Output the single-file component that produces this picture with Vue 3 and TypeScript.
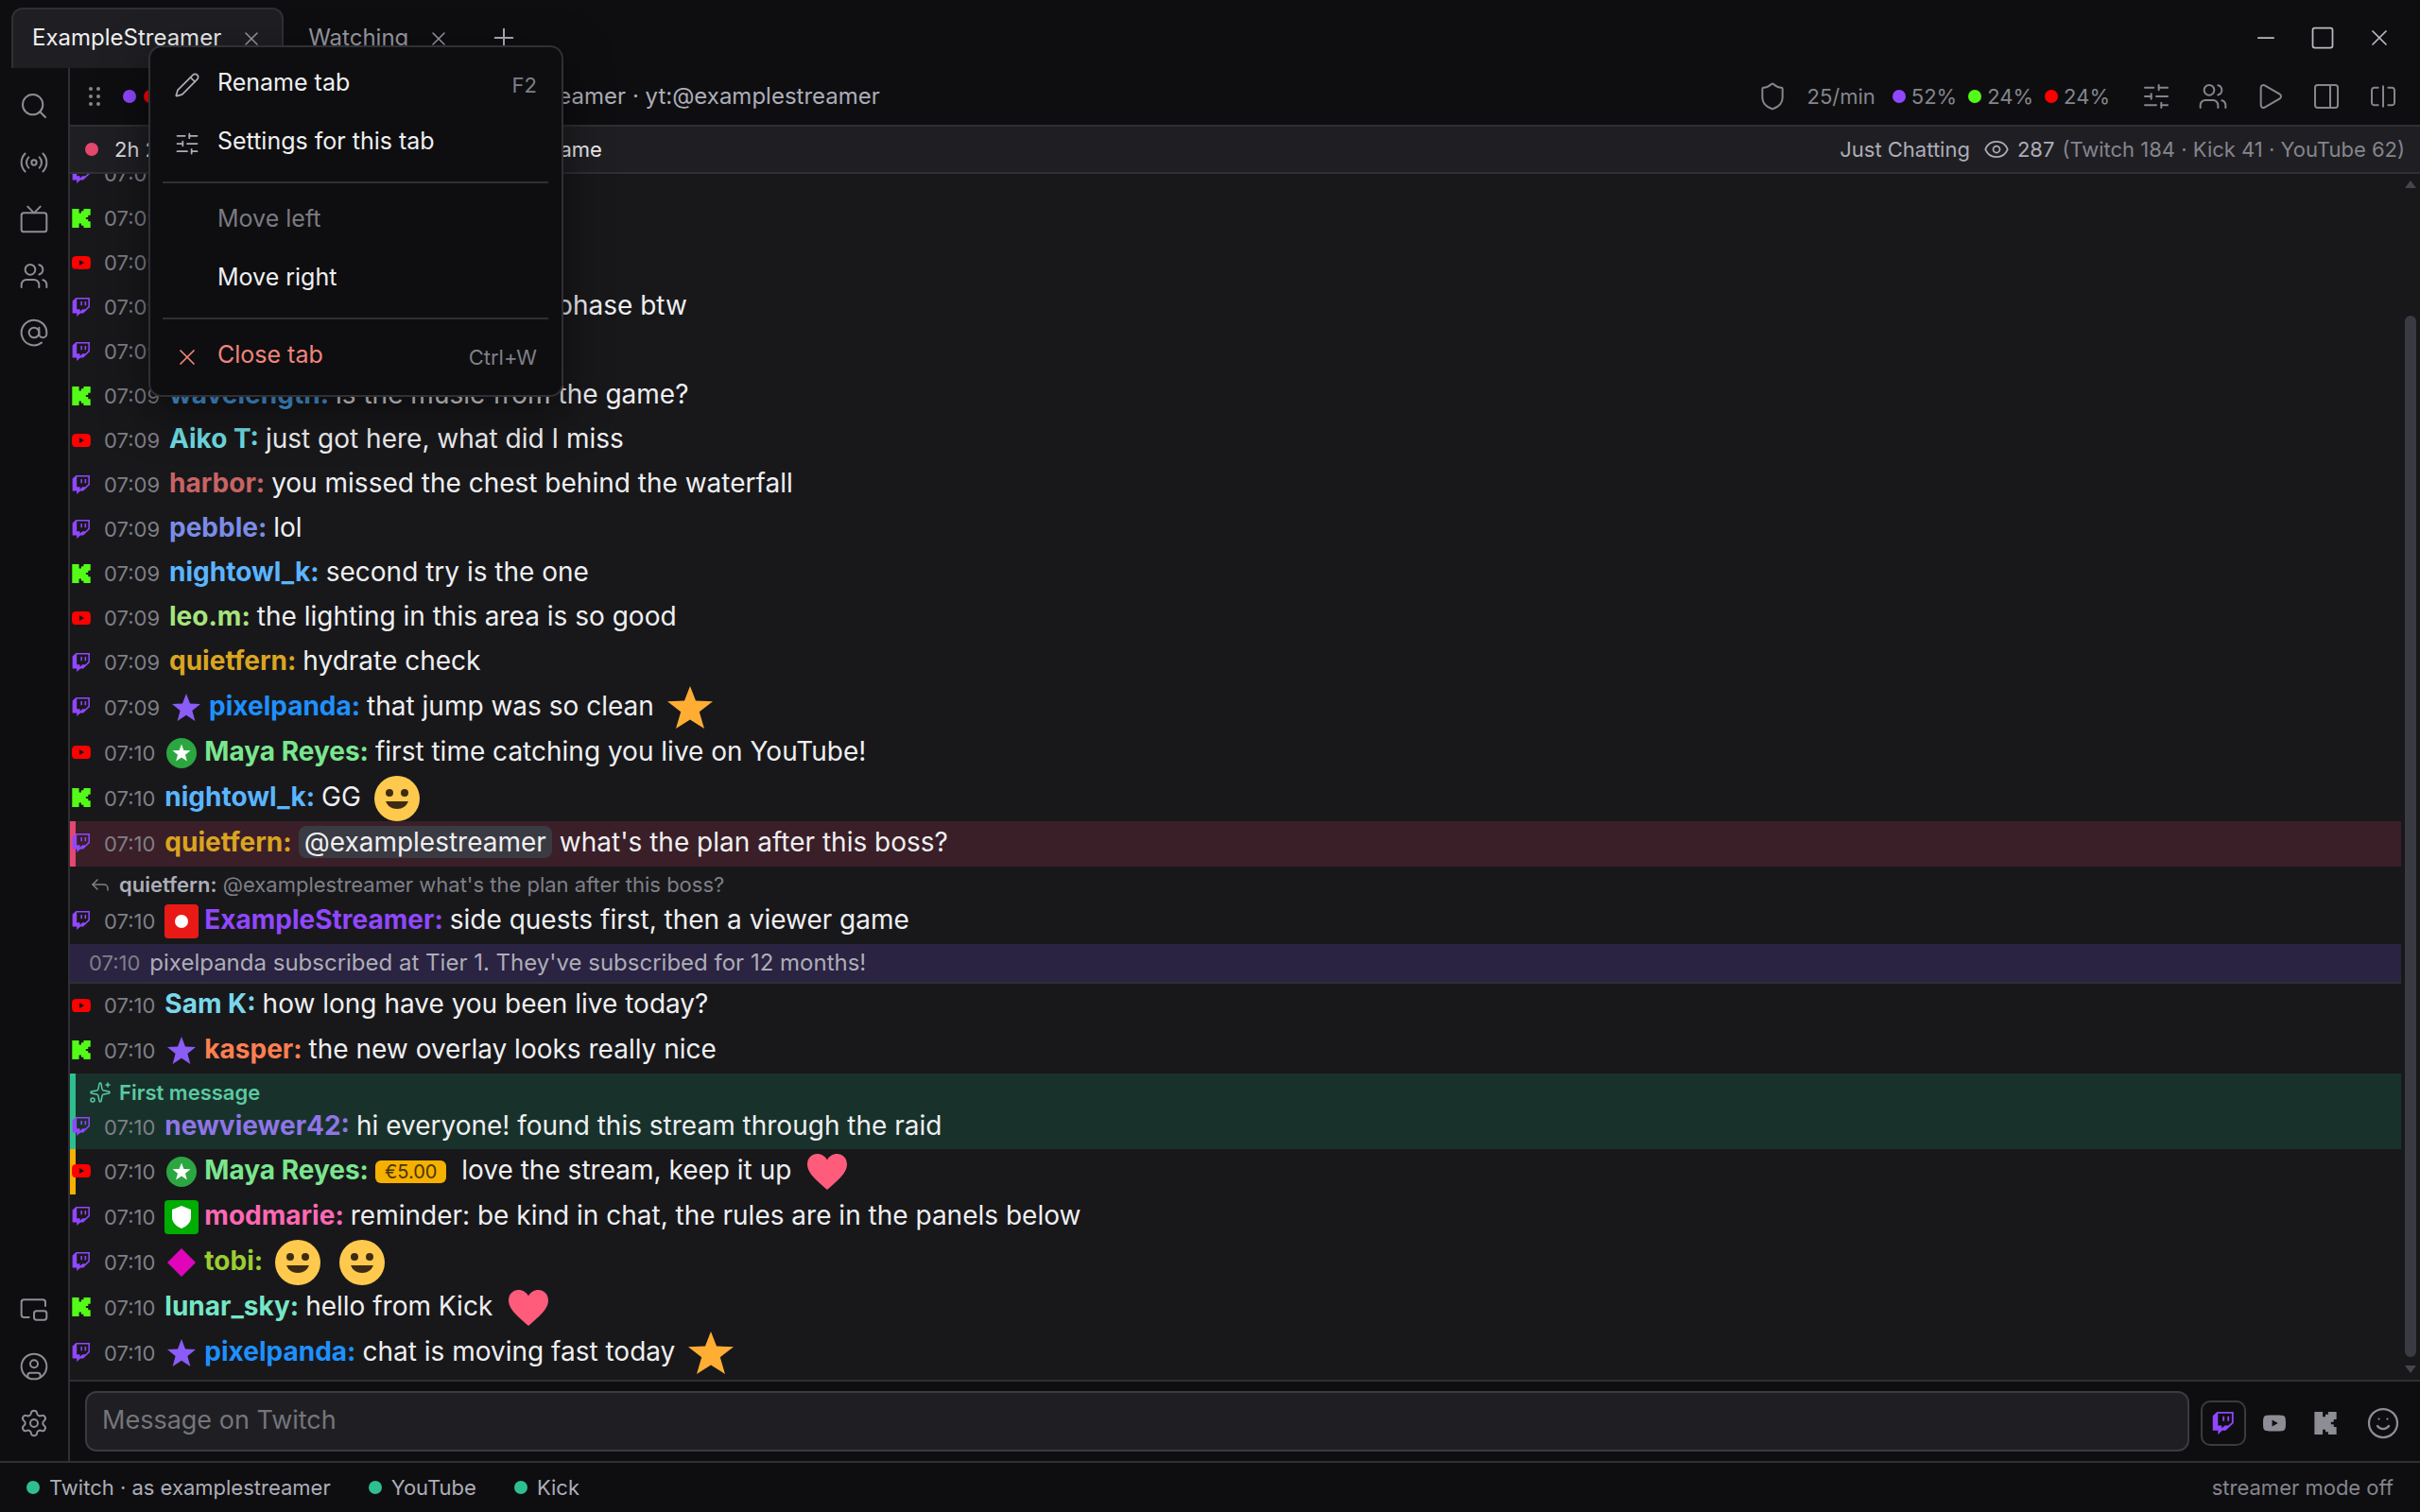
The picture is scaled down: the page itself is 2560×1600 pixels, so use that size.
<script setup lang="ts">
import { ref } from 'vue'

type Platform = 'twitch' | 'youtube' | 'kick'
type Badge = 'star' | 'member' | 'broadcaster' | 'moderator' | 'diamond'
type Emote = 'smile' | 'heart' | 'goldstar'

interface Part {
  kind: 'text' | 'mention' | 'emote' | 'tag'
  text?: string
  emote?: Emote
}

interface Message {
  id: number
  platform?: Platform
  time: string
  name?: string
  color?: string
  badge?: Badge
  look?: 'mention' | 'first' | 'paid' | 'system'
  reply?: { name: string; text: string }
  parts: Part[]
}

const text = (value: string): Part => ({ kind: 'text', text: value })
const emote = (name: Emote): Part => ({ kind: 'emote', emote: name })

const icons: Record<string, string[]> = {
  search: ['m21 21-4.34-4.34', 'M19 11a8 8 0 1 1-16 0 8 8 0 0 1 16 0z'],
  radio: [
    'M16.247 7.761a6 6 0 0 1 0 8.478',
    'M19.075 4.933a10 10 0 0 1 0 14.134',
    'M4.925 19.067a10 10 0 0 1 0-14.134',
    'M7.753 16.239a6 6 0 0 1 0-8.478',
    'M14 12a2 2 0 1 1-4 0 2 2 0 0 1 4 0z',
  ],
  tv: ['m17 2-5 5-5-5', 'M4 7h16a2 2 0 0 1 2 2v11a2 2 0 0 1-2 2H4a2 2 0 0 1-2-2V9a2 2 0 0 1 2-2z'],
  users: [
    'M16 21v-2a4 4 0 0 0-4-4H6a4 4 0 0 0-4 4v2',
    'M16 3.128a4 4 0 0 1 0 7.744',
    'M22 21v-2a4 4 0 0 0-3-3.87',
    'M13 7a4 4 0 1 1-8 0 4 4 0 0 1 8 0z',
  ],
  at: ['M16 12a4 4 0 1 1-8 0 4 4 0 0 1 8 0z', 'M16 8v5a3 3 0 0 0 6 0v-1a10 10 0 1 0-4 8'],
  popout: [
    'M21 9V6a2 2 0 0 0-2-2H4a2 2 0 0 0-2 2v10c0 1.1.9 2 2 2h4',
    'M14 13h6a2 2 0 0 1 2 2v3a2 2 0 0 1-2 2h-6a2 2 0 0 1-2-2v-3a2 2 0 0 1 2-2z',
  ],
  account: [
    'M22 12a10 10 0 1 1-20 0 10 10 0 0 1 20 0z',
    'M15 10a3 3 0 1 1-6 0 3 3 0 0 1 6 0z',
    'M7 20.662V19a2 2 0 0 1 2-2h6a2 2 0 0 1 2 2v1.662',
  ],
  settings: [
    'M9.671 4.136a2.34 2.34 0 0 1 4.659 0 2.34 2.34 0 0 0 3.319 1.915 2.34 2.34 0 0 1 2.33 4.033 2.34 2.34 0 0 0 0 3.831 2.34 2.34 0 0 1-2.33 4.033 2.34 2.34 0 0 0-3.319 1.915 2.34 2.34 0 0 1-4.659 0 2.34 2.34 0 0 0-3.32-1.915 2.34 2.34 0 0 1-2.33-4.033 2.34 2.34 0 0 0 0-3.831A2.34 2.34 0 0 1 6.35 6.051a2.34 2.34 0 0 0 3.319-1.915',
    'M15 12a3 3 0 1 1-6 0 3 3 0 0 1 6 0z',
  ],
  shield: [
    'M20 13c0 5-3.5 7.5-7.66 8.95a1 1 0 0 1-.67-.01C7.5 20.5 4 18 4 13V6a1 1 0 0 1 1-1c2 0 4.5-1.2 6.24-2.72a1.17 1.17 0 0 1 1.52 0C14.51 3.81 17 5 19 5a1 1 0 0 1 1 1z',
  ],
  sliders: ['M10 5H3', 'M12 19H3', 'M14 3v4', 'M16 17v4', 'M21 12h-9', 'M21 19h-5', 'M21 5h-7', 'M8 10v4', 'M8 12H3'],
  play: ['M5 5a2 2 0 0 1 3.008-1.728l11.997 6.998a2 2 0 0 1 .003 3.458l-12 7A2 2 0 0 1 5 19z'],
  panel: ['M5 3h14a2 2 0 0 1 2 2v14a2 2 0 0 1-2 2H5a2 2 0 0 1-2-2V5a2 2 0 0 1 2-2z', 'M15 3v18'],
  split: ['M8 19H5c-1 0-2-1-2-2V7c0-1 1-2 2-2h3', 'M16 5h3c1 0 2 1 2 2v10c0 1-1 2-2 2h-3', 'M12 4v16'],
  eye: [
    'M2.062 12.348a1 1 0 0 1 0-.696 10.75 10.75 0 0 1 19.876 0 1 1 0 0 1 0 .696 10.75 10.75 0 0 1-19.876 0',
    'M15 12a3 3 0 1 1-6 0 3 3 0 0 1 6 0z',
  ],
  reply: ['M20 18v-2a4 4 0 0 0-4-4H4', 'm9 17-5-5 5-5'],
  sparkles: [
    'M11.017 2.814a1 1 0 0 1 1.966 0l1.051 5.558a2 2 0 0 0 1.594 1.594l5.558 1.051a1 1 0 0 1 0 1.966l-5.558 1.051a2 2 0 0 0-1.594 1.594l-1.051 5.558a1 1 0 0 1-1.966 0l-1.051-5.558a2 2 0 0 0-1.594-1.594l-5.558-1.051a1 1 0 0 1 0-1.966l5.558-1.051a2 2 0 0 0 1.594-1.594z',
    'M20 2v4',
    'M22 4h-4',
    'M6 20a2 2 0 1 1-4 0 2 2 0 0 1 4 0z',
  ],
  pencil: [
    'M21.174 6.812a1 1 0 0 0-3.986-3.987L3.842 16.174a2 2 0 0 0-.5.83l-1.321 4.352a.5.5 0 0 0 .623.622l4.353-1.32a2 2 0 0 0 .83-.497z',
    'm15 5 4 4',
  ],
  close: ['M18 6 6 18', 'm6 6 12 12'],
  plus: ['M5 12h14', 'M12 5v14'],
  minus: ['M5 12h14'],
  square: ['M5 3h14a2 2 0 0 1 2 2v14a2 2 0 0 1-2 2H5a2 2 0 0 1-2-2V5a2 2 0 0 1 2-2z'],
  smile: ['M22 12a10 10 0 1 1-20 0 10 10 0 0 1 20 0z', 'M8 14s1.500 2 4 2 4-2 4-2', 'M9 9v.01', 'M15 9v.01'],
}

const logos: Record<Platform, { box: string; d: string }> = {
  twitch: {
    box: '1 0 22.500 24',
    d: 'M11.571 4.714h1.715v5.143H11.57zm4.715 0H18v5.143h-1.714zM6 0L1.714 4.286v15.428h5.143V24l4.286-4.286h3.428L22.286 12V0zm14.571 11.143l-3.428 3.428h-3.429l-3 3v-3H6.857V1.714h13.714Z',
  },
  youtube: {
    box: '0 0 24 24',
    d: 'M23.498 6.186a3.016 3.016 0 0 0-2.122-2.136C19.505 3.545 12 3.545 12 3.545s-7.505 0-9.377.505A3.017 3.017 0 0 0 .502 6.186C0 8.070 0 12 0 12s0 3.930.502 5.814a3.016 3.016 0 0 0 2.122 2.136c1.871.505 9.376.505 9.376.505s7.505 0 9.377-.505a3.015 3.015 0 0 0 2.122-2.136C24 15.930 24 12 24 12s0-3.930-.502-5.814zM9.545 15.568V8.432L15.818 12l-6.273 3.568z',
  },
  kick: {
    box: '1 0 22 24',
    d: 'M1.333 0h8v5.333H12V2.667h2.667V0h8v8H20v2.667h-2.667v2.666H20V16h2.667v8h-8v-2.667H12v-2.666H9.333V24h-8Z',
  },
}

const railTop = [
  { icon: 'search', label: 'Search' },
  { icon: 'radio', label: 'Live' },
  { icon: 'tv', label: 'Channels' },
  { icon: 'users', label: 'People' },
  { icon: 'at', label: 'Mentions' },
]
const railBottom = [
  { icon: 'popout', label: 'Pop out' },
  { icon: 'account', label: 'Account' },
  { icon: 'settings', label: 'Settings' },
]
const tools = [
  { icon: 'sliders', label: 'Tab settings' },
  { icon: 'users', label: 'Viewers' },
  { icon: 'play', label: 'Player' },
  { icon: 'panel', label: 'Side panel' },
  { icon: 'split', label: 'Split view' },
]
const shares: { platform: Platform; value: string }[] = [
  { platform: 'twitch', value: '52%' },
  { platform: 'kick', value: '24%' },
  { platform: 'youtube', value: '24%' },
]
const connections = ['Twitch · as examplestreamer', 'YouTube', 'Kick']
const targets: { platform: Platform; label: string }[] = [
  { platform: 'twitch', label: 'Send to Twitch' },
  { platform: 'youtube', label: 'Send to YouTube' },
  { platform: 'kick', label: 'Send to Kick' },
]

const target = ref<Platform>('twitch')
const draft = ref('')

const messages: Message[] = [
  { id: 1, platform: 'twitch', time: '07:09', name: 'tobi', color: '#9acd32', parts: [text('hey all')] },
  { id: 2, platform: 'kick', time: '07:09', name: 'kasper', color: '#ff7f50', parts: [text('evening chat')] },
  { id: 3, platform: 'youtube', time: '07:09', name: 'Sam K', color: '#7ad7ea', parts: [text('volume is perfect')] },
  { id: 4, platform: 'twitch', time: '07:09', name: 'modmarie', color: '#ff69b4', parts: [text('boss has a second phase btw')] },
  { id: 5, platform: 'twitch', time: '07:09', name: 'pebble', color: '#7b8ce6', parts: [text('good to know')] },
  { id: 6, platform: 'kick', time: '07:09', name: 'wavelength', color: '#4da6f0', parts: [text('is the music from the game?')] },
  { id: 7, platform: 'youtube', time: '07:09', name: 'Aiko T', color: '#6fdbe0', parts: [text('just got here, what did I miss')] },
  { id: 8, platform: 'twitch', time: '07:09', name: 'harbor', color: '#c86464', parts: [text('you missed the chest behind the waterfall')] },
  { id: 9, platform: 'twitch', time: '07:09', name: 'pebble', color: '#7b8ce6', parts: [text('lol')] },
  { id: 10, platform: 'kick', time: '07:09', name: 'nightowl_k', color: '#5bb5ff', parts: [text('second try is the one')] },
  { id: 11, platform: 'youtube', time: '07:09', name: 'leo.m', color: '#a6e57c', parts: [text('the lighting in this area is so good')] },
  { id: 12, platform: 'twitch', time: '07:09', name: 'quietfern', color: '#daa520', parts: [text('hydrate check')] },
  { id: 13, platform: 'twitch', time: '07:09', name: 'pixelpanda', color: '#1e90ff', badge: 'star', parts: [text('that jump was so clean '), emote('goldstar')] },
  { id: 14, platform: 'youtube', time: '07:10', name: 'Maya Reyes', color: '#7ae68e', badge: 'member', parts: [text('first time catching you live on YouTube!')] },
  { id: 15, platform: 'kick', time: '07:10', name: 'nightowl_k', color: '#5bb5ff', parts: [text('GG '), emote('smile')] },
  {
    id: 16, platform: 'twitch', time: '07:10', name: 'quietfern', color: '#daa520', look: 'mention',
    parts: [{ kind: 'mention', text: '@examplestreamer' }, text(" what's the plan after this boss?")],
  },
  {
    id: 17, platform: 'twitch', time: '07:10', name: 'ExampleStreamer', color: '#9147ff', badge: 'broadcaster',
    reply: { name: 'quietfern:', text: "@examplestreamer what's the plan after this boss?" },
    parts: [text('side quests first, then a viewer game')],
  },
  { id: 18, time: '07:10', look: 'system', parts: [text("pixelpanda subscribed at Tier 1. They've subscribed for 12 months!")] },
  { id: 19, platform: 'youtube', time: '07:10', name: 'Sam K', color: '#7ad7ea', parts: [text('how long have you been live today?')] },
  { id: 20, platform: 'kick', time: '07:10', name: 'kasper', color: '#ff7f50', badge: 'star', parts: [text('the new overlay looks really nice')] },
  { id: 21, platform: 'twitch', time: '07:10', name: 'newviewer42', color: '#8f75e6', look: 'first', parts: [text('hi everyone! found this stream through the raid')] },
  {
    id: 22, platform: 'youtube', time: '07:10', name: 'Maya Reyes', color: '#7ae68e', badge: 'member', look: 'paid',
    parts: [{ kind: 'tag', text: '€5.00' }, text(' love the stream, keep it up '), emote('heart')],
  },
  { id: 23, platform: 'twitch', time: '07:10', name: 'modmarie', color: '#ff69b4', badge: 'moderator', parts: [text('reminder: be kind in chat, the rules are in the panels below')] },
  { id: 24, platform: 'twitch', time: '07:10', name: 'tobi', color: '#9acd32', badge: 'diamond', parts: [emote('smile'), text(' '), emote('smile')] },
  { id: 25, platform: 'kick', time: '07:10', name: 'lunar_sky', color: '#76e6c6', parts: [text('hello from Kick '), emote('heart')] },
  { id: 26, platform: 'twitch', time: '07:10', name: 'pixelpanda', color: '#1e90ff', badge: 'star', parts: [text('chat is moving fast today '), emote('goldstar')] },
]

const isTall = (m: Message): boolean =>
  Boolean(m.badge) || m.look === 'mention' || m.parts.some((p) => p.kind === 'emote')
</script>

<template>
  <div class="app">
    <header class="titlebar">
      <nav class="tabs" aria-label="Tabs">
        <div class="tab active">
          <button type="button" class="tab-name">ExampleStreamer</button>
          <button type="button" class="plain" aria-label="Close ExampleStreamer">
            <svg class="ic s24" viewBox="0 0 24 24"><path v-for="d in icons.close" :key="d" :d="d" /></svg>
          </button>
        </div>
        <div class="tab">
          <button type="button" class="tab-name">Watching</button>
          <button type="button" class="plain" aria-label="Close Watching">
            <svg class="ic s24" viewBox="0 0 24 24"><path v-for="d in icons.close" :key="d" :d="d" /></svg>
          </button>
        </div>
        <button type="button" class="plain add" aria-label="New tab">
          <svg class="ic s32" viewBox="0 0 24 24"><path v-for="d in icons.plus" :key="d" :d="d" /></svg>
        </button>
      </nav>
      <div class="window-controls">
        <button type="button" class="plain" aria-label="Minimise">
          <svg class="ic s28" viewBox="0 0 24 24"><path v-for="d in icons.minus" :key="d" :d="d" /></svg>
        </button>
        <button type="button" class="plain" aria-label="Maximise">
          <svg class="ic s28" viewBox="0 0 24 24"><path v-for="d in icons.square" :key="d" :d="d" /></svg>
        </button>
        <button type="button" class="plain" aria-label="Close window">
          <svg class="ic s28" viewBox="0 0 24 24"><path v-for="d in icons.close" :key="d" :d="d" /></svg>
        </button>
      </div>
    </header>

    <div class="middle">
      <nav class="rail" aria-label="Main">
        <button v-for="item in railTop" :key="item.icon" type="button" class="plain rail-btn" :aria-label="item.label">
          <svg class="ic s32" viewBox="0 0 24 24"><path v-for="d in icons[item.icon]" :key="d" :d="d" /></svg>
        </button>
        <span class="grow"></span>
        <button v-for="item in railBottom" :key="item.icon" type="button" class="plain rail-btn" :aria-label="item.label">
          <svg class="ic s32" viewBox="0 0 24 24"><path v-for="d in icons[item.icon]" :key="d" :d="d" /></svg>
        </button>
      </nav>

      <main class="pane">
        <div class="toolbar">
          <svg class="grip" viewBox="0 0 12 20">
            <circle cx="2" cy="2" r="2" /><circle cx="10" cy="2" r="2" />
            <circle cx="2" cy="10" r="2" /><circle cx="10" cy="10" r="2" />
            <circle cx="2" cy="18" r="2" /><circle cx="10" cy="18" r="2" />
          </svg>
          <span class="sources"><i class="dot twitch"></i><i class="dot youtube"></i><i class="dot kick"></i></span>
          <span class="channels">examplestreamer · kick:examplestreamer · yt:@examplestreamer</span>
          <span class="grow"></span>
          <svg class="ic s32" viewBox="0 0 24 24"><path v-for="d in icons.shield" :key="d" :d="d" /></svg>
          <span class="rate">25/min</span>
          <span v-for="s in shares" :key="s.platform" class="share"><i class="dot" :class="s.platform"></i>{{ s.value }}</span>
          <div class="tools">
            <button v-for="t in tools" :key="t.icon" type="button" class="plain tool" :aria-label="t.label">
              <svg class="ic s32" viewBox="0 0 24 24"><path v-for="d in icons[t.icon]" :key="d" :d="d" /></svg>
            </button>
          </div>
        </div>

        <div class="info">
          <i class="dot live"></i>
          <span class="uptime">2h 24m</span>
          <span class="title">Chill run, side quests, then viewer game</span>
          <span class="grow"></span>
          <span class="category">Just Chatting</span>
          <svg class="ic s28 eye" viewBox="0 0 24 24"><path v-for="d in icons.eye" :key="d" :d="d" /></svg>
          <span class="category">287</span>
          <span class="split">(Twitch 184 · Kick 41 · YouTube 62)</span>
        </div>

        <div class="chat">
          <ol class="log">
            <li v-for="m in messages" :key="m.id" :class="[m.look, { tall: isTall(m) }]">
              <div v-if="m.reply" class="over reply">
                <svg class="ic s24" viewBox="0 0 24 24"><path v-for="d in icons.reply" :key="d" :d="d" /></svg>
                <span><b>{{ m.reply.name }}</b> {{ m.reply.text }}</span>
              </div>
              <div v-if="m.look === 'first'" class="over welcome">
                <svg class="ic s24" viewBox="0 0 24 24"><path v-for="d in icons.sparkles" :key="d" :d="d" /></svg>
                <span>First message</span>
              </div>
              <div class="line">
                <svg
                  v-if="m.platform"
                  class="logo"
                  :class="m.platform"
                  :viewBox="logos[m.platform].box"
                  preserveAspectRatio="none"
                ><path :d="logos[m.platform].d" /></svg>
                <p class="body">
                  <time>{{ m.time }}</time>
                  <template v-if="m.badge">
                    <svg class="badge" viewBox="0 0 36 36">
                      <path v-if="m.badge === 'star'" fill="#8b5cf6" d="M18 3l4 10.500 11 .5-8.600 7 3 11L18 25.800 8.600 32l3-11L3 14l11-.5z" />
                      <g v-else-if="m.badge === 'member'">
                        <circle cx="18" cy="18" r="16" fill="#2ba640" />
                        <path fill="#fff" d="M18 8.500l2.400 6.500 7.100.300-5.500 4.400 1.900 6.800L18 22.600l-5.900 3.900 1.900-6.800-5.500-4.400 7.100-.3z" />
                      </g>
                      <g v-else-if="m.badge === 'broadcaster'">
                        <rect width="36" height="36" rx="4" fill="#e91916" />
                        <circle cx="18" cy="18" r="7" fill="#fff" />
                      </g>
                      <g v-else-if="m.badge === 'moderator'">
                        <rect width="36" height="36" rx="4" fill="#00ad03" />
                        <path fill="#fff" d="M18 6l10 4v8c0 6-4.500 9.600-10 12-5.500-2.400-10-6-10-12v-8z" />
                      </g>
                      <path v-else fill="#e005b9" d="M18 3l15 15-15 15L3 18z" />
                    </svg>
                  </template>
                  <b v-if="m.name" class="name" :style="{ color: m.color }">{{ m.name }}:</b>
                  <template v-for="(p, i) in m.parts" :key="i">
                    <span v-if="p.kind === 'text'">{{ p.text }}</span>
                    <span v-else-if="p.kind === 'mention'" class="chip">{{ p.text }}</span>
                    <span v-else-if="p.kind === 'tag'" class="tag">{{ p.text }}</span>
                    <svg v-else class="emote" viewBox="0 0 48 48">
                      <g v-if="p.emote === 'smile'">
                        <circle cx="24" cy="24" r="24" fill="#ffc94d" />
                        <circle cx="16" cy="18" r="4" fill="#3d2b14" />
                        <circle cx="32" cy="18" r="4" fill="#3d2b14" />
                        <path d="M12 27h24a13 13 0 0 1-24 0z" fill="#3d2b14" />
                      </g>
                      <path
                        v-else-if="p.emote === 'heart'"
                        fill="#ff5c7c"
                        d="M24 43C15 35 3 26 3 16.500 3 9 8 5 13.500 5c4.500 0 8.500 2.500 10.500 6.500C26 7.500 30 5 34.500 5 40 5 45 9 45 16.500 45 26 33 35 24 43z"
                      />
                      <path v-else fill="#ffae33" d="M24 1l6 15.500 18 .7-14.200 11L39 46 24 36.500 9 46l5.200-17.800L0 17.200l18-.7z" />
                    </svg>
                  </template>
                </p>
              </div>
            </li>
          </ol>
          <div class="scrollbar" aria-hidden="true">
            <svg viewBox="0 0 12 8"><path d="M6 0l6 8H0z" /></svg>
            <span class="track"><span class="thumb"></span></span>
            <svg viewBox="0 0 12 8"><path d="M0 0h12L6 8z" /></svg>
          </div>
        </div>

        <form class="composer" @submit.prevent>
          <input v-model="draft" type="text" aria-label="Message" placeholder="Message on Twitch" />
          <div class="targets">
            <button
              v-for="t in targets"
              :key="t.platform"
              type="button"
              class="plain target"
              :class="{ on: target === t.platform }"
              :aria-label="t.label"
              @click="target = t.platform"
            >
              <svg :viewBox="logos[t.platform].box" preserveAspectRatio="none"><path :d="logos[t.platform].d" /></svg>
            </button>
            <button type="button" class="plain emoji" aria-label="Emotes">
              <svg class="ic s36" viewBox="0 0 24 24"><path v-for="d in icons.smile" :key="d" :d="d" /></svg>
            </button>
          </div>
        </form>
      </main>
    </div>

    <footer class="status">
      <span v-for="c in connections" :key="c" class="conn"><i class="dot ok"></i>{{ c }}</span>
      <span class="grow"></span>
      <span class="mode">streamer mode off</span>
    </footer>

    <div class="menu" role="menu">
      <button type="button" role="menuitem">
        <svg class="ic s28" viewBox="0 0 24 24"><path v-for="d in icons.pencil" :key="d" :d="d" /></svg>
        <span class="label">Rename tab</span><kbd>F2</kbd>
      </button>
      <button type="button" role="menuitem">
        <svg class="ic s28" viewBox="0 0 24 24"><path v-for="d in icons.sliders" :key="d" :d="d" /></svg>
        <span class="label">Settings for this tab</span>
      </button>
      <hr />
      <button type="button" role="menuitem" class="bare" disabled><span class="label">Move left</span></button>
      <button type="button" role="menuitem" class="bare"><span class="label">Move right</span></button>
      <hr />
      <button type="button" role="menuitem" class="danger">
        <svg class="ic s28" viewBox="0 0 24 24"><path v-for="d in icons.close" :key="d" :d="d" /></svg>
        <span class="label">Close tab</span><kbd>Ctrl+W</kbd>
      </button>
    </div>
  </div>
</template>

<style>
body {
  background: #0e0e10;
}
</style>

<style scoped>
.app {
  position: relative;
  display: flex;
  flex-direction: column;
  height: 100vh;
  overflow: hidden;
  background: #0e0e10;
  color: #efeff1;
  font-family: Inter, "Liberation Sans", sans-serif;
  font-size: 24px;
}
button,
input {
  font: inherit;
}
.plain {
  display: flex;
  align-items: center;
  justify-content: center;
  padding: 0;
  border: 0;
  background: none;
  color: inherit;
}
.grow {
  flex: 1;
}
.ic {
  flex: none;
  fill: none;
  stroke: currentColor;
  stroke-width: 1.5;
  stroke-linecap: round;
  stroke-linejoin: round;
}
.s24 { width: 24px; height: 24px; }
.s28 { width: 28px; height: 28px; }
.s32 { width: 32px; height: 32px; }
.s36 { width: 36px; height: 36px; }

.dot {
  display: inline-block;
  flex: none;
  width: 14px;
  height: 14px;
  border-radius: 50%;
}
.dot.twitch { background: #9147ff; }
.dot.youtube { background: #ff0000; }
.dot.kick { background: #53fc18; }
.dot.live { background: #e5476d; }
.dot.ok { background: #2fbf8f; }

.titlebar {
  display: flex;
  justify-content: space-between;
  height: 72px;
}
.tabs {
  display: flex;
  gap: 4px;
  padding: 8px 0 0 12px;
}
.tab {
  display: flex;
  align-items: center;
  gap: 20px;
  padding: 0 20px;
  border: 2px solid transparent;
  border-bottom: 0;
  border-radius: 12px 12px 0 0;
  color: #9a9aa3;
}
.tab.active {
  border-color: #2f2f35;
  background: #1f1f23;
}
.tab-name {
  padding: 0 0 4px;
  border: 0;
  background: none;
  color: #9a9aa3;
  font-size: 24px;
}
.active .tab-name {
  color: #efeff1;
}
.add {
  width: 62px;
  color: #adadb8;
}
.window-controls {
  display: flex;
  padding: 8px 13px 0 0;
  color: #b9b9c0;
}
.window-controls button {
  width: 60px;
}

.middle {
  display: flex;
  flex: 1;
  min-height: 0;
}
.rail {
  display: flex;
  flex: none;
  flex-direction: column;
  width: 72px;
  padding: 10px 0;
  border-right: 2px solid #2f2f35;
  color: #8d8d95;
}
.rail-btn {
  height: 60px;
}
.pane {
  display: flex;
  flex: 1;
  flex-direction: column;
  min-width: 0;
}
.toolbar {
  display: flex;
  flex: none;
  align-items: center;
  height: 60px;
  padding: 0 9px 0 20px;
  border-bottom: 2px solid #2f2f35;
  color: #85858d;
  font-size: 22px;
}
.grip {
  width: 12px;
  height: 20px;
  margin-right: 24px;
  fill: #85858d;
}
.sources {
  display: flex;
  gap: 8px;
  margin-right: 8px;
}
.channels {
  padding-bottom: 2px;
  color: #adadb8;
  font-size: 24px;
}
.rate {
  margin: 0 18px 0 20px;
}
.share {
  display: flex;
  align-items: center;
  gap: 6px;
  margin-right: 12px;
}
.tools {
  display: flex;
  margin-left: 7px;
}
.tool {
  width: 60px;
  height: 60px;
}
.info {
  display: flex;
  flex: none;
  align-items: center;
  height: 48px;
  padding: 0 16px;
  border-bottom: 2px solid #2f2f35;
  background: #1f1f23;
  font-size: 22px;
}
.uptime {
  margin: 0 22px 0 17px;
  color: #dedee3;
}
.category {
  color: #adadb8;
}
.eye {
  margin: 0 8px 0 14px;
  color: #adadb8;
}
.split {
  margin-left: 8px;
  color: #85858d;
}

.chat {
  display: flex;
  flex: 1;
  min-height: 0;
  background: #18181b;
}
.log {
  display: flex;
  flex: 1;
  flex-direction: column;
  justify-content: flex-end;
  min-width: 0;
  margin: 0;
  padding: 0 0 4px;
  overflow: hidden;
  list-style: none;
}
.log li {
  flex: none;
}
.line {
  display: flex;
  align-items: center;
  padding-left: 2px;
}
.logo {
  flex: none;
  width: 20px;
  height: 20px;
  margin: 0 14px 2px 0;
}
.logo.twitch { fill: #9147ff; }
.logo.youtube { fill: #ff0000; }
.logo.kick { fill: #53fc18; }
.body {
  flex: 1;
  min-width: 0;
  margin: 0;
  padding: 2px 0 6px;
  font-size: 28px;
  line-height: 39px;
  white-space: pre-wrap;
}
.tall .body {
  line-height: 40px;
}
.body time {
  margin-right: 10px;
  color: #7f7f87;
  font-size: 22px;
  line-height: 24px;
}
.name {
  margin-right: 7px;
  font-weight: 700;
}
.badge {
  width: 36px;
  height: 36px;
  margin: -8px 6px -8px 0;
  vertical-align: middle;
}
.emote {
  width: 48px;
  height: 48px;
  margin: -12px 6px;
  vertical-align: middle;
}
.chip {
  padding: 0 6px;
  border-radius: 8px;
  background: #3a3a42;
}
.tag {
  display: inline-block;
  margin-right: 8px;
  padding: 0 10px;
  border-radius: 6px;
  background: #f5b000;
  color: #4a3600;
  font-size: 20px;
  line-height: 24px;
  vertical-align: middle;
}
.over {
  display: flex;
  align-items: center;
  gap: 8px;
  height: 34px;
  padding: 4px 0 0 20px;
  box-sizing: border-box;
  font-size: 22px;
}
.reply {
  color: #7f7f87;
}
.reply b {
  color: #adadb8;
  font-weight: 600;
}
.welcome {
  padding-top: 6px;
  color: #5cc9a2;
  font-weight: 600;
}
.mention {
  background: #3a1f28;
  box-shadow: inset 6px 0 #e5476d;
}
.first {
  background: #18322b;
  box-shadow: inset 6px 0 #2fbf8f;
}
.first .body {
  padding-bottom: 5px;
}
.paid {
  box-shadow: inset 6px 0 #f5b000;
}
.system {
  border-bottom: 2px solid #2f2f35;
  background: #2a2341;
}
.system .line {
  padding-left: 20px;
}
.system .body {
  padding: 0;
  color: #adadb8;
  font-size: 24px;
  line-height: 40px;
}
.scrollbar {
  display: flex;
  flex: none;
  flex-direction: column;
  width: 12px;
  padding: 7px 4px;
}
.scrollbar svg {
  width: 12px;
  height: 8px;
  fill: #45454b;
}
.track {
  display: flex;
  flex: 1;
  flex-direction: column;
  justify-content: flex-end;
  padding: 12px 0 9px;
}
.thumb {
  height: 90%;
  border-radius: 6px;
  background: #3a3a42;
}

.composer {
  display: flex;
  flex: none;
  gap: 12px;
  padding: 10px 8px 10px 16px;
  border-top: 2px solid #2f2f35;
}
.composer input {
  flex: 1;
  min-width: 0;
  height: 64px;
  padding: 0 16px 4px;
  box-sizing: border-box;
  border: 2px solid #3a3a40;
  border-radius: 12px;
  outline: none;
  background: #1f1f23;
  color: #efeff1;
  font-size: 27px;
}
.composer input::placeholder {
  color: #75757b;
}
.targets {
  display: flex;
  align-items: center;
  gap: 6px;
  padding-top: 4px;
}
.target {
  width: 48px;
  height: 48px;
  box-sizing: border-box;
  border: 2px solid transparent;
  border-radius: 10px;
}
.target svg {
  width: 24px;
  height: 24px;
  fill: #8d8d95;
}
.target.on {
  border-color: #3a3a40;
}
.target.on svg {
  fill: #9147ff;
}
.emoji {
  width: 62px;
  height: 48px;
  color: #8d8d95;
}

.status {
  display: flex;
  flex: none;
  align-items: center;
  height: 52px;
  padding: 0 28px;
  border-top: 2px solid #2f2f35;
  color: #adadb8;
  font-size: 22px;
}
.conn {
  display: flex;
  align-items: center;
  gap: 10px;
  margin-right: 40px;
}
.mode {
  color: #85858d;
}

.menu {
  position: absolute;
  top: 48px;
  left: 157px;
  width: 439px;
  padding: 9px 14px 9px 13px;
  box-sizing: border-box;
  border: 2px solid #2f2f35;
  border-radius: 14px;
  background: #0e0e10;
  box-shadow: 0 16px 48px rgba(0, 0, 0, 0.5);
}
.menu button {
  display: flex;
  align-items: center;
  gap: 18px;
  width: 100%;
  height: 62px;
  padding: 0 12px;
  border: 0;
  background: none;
  color: #efeff1;
  font-size: 25px;
  text-align: left;
}
.menu .ic {
  color: #adadb8;
}
.menu .label {
  flex: 1;
  padding-bottom: 6px;
}
.menu .bare {
  padding-left: 58px;
}
.menu button:disabled {
  color: #7a7a82;
}
.menu .danger,
.menu .danger .ic {
  color: #f0857d;
}
.menu kbd {
  color: #7f7f87;
  font-family: inherit;
  font-size: 22px;
}
.menu hr {
  height: 2px;
  margin: 9px 0;
  border: 0;
  background: #2f2f35;
}
</style>
